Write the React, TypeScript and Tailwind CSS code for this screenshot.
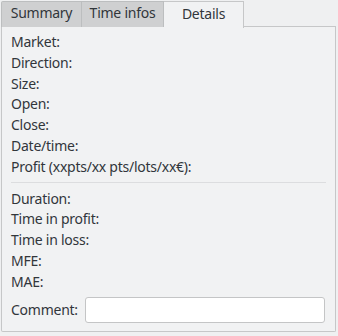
const font = { fontFamily: '"Noto Sans", sans-serif' };

const topRows = ['Market:', 'Direction:', 'Size:', 'Open:', 'Close:', 'Date/time:', 'Profit (xxpts/xx pts/lots/xx€):'];
const bottomRows = ['Duration:', 'Time in profit:', 'Time in loss:', 'MFE:', 'MAE:'];

export default function App() {
  return (
    <div className="w-[338px] h-[336px] bg-[#eff0f1] text-[14px] tracking-[-0.25px] text-[#31363b] pl-[1px] pr-[2px] pt-0" style={font}>
      <div className="flex h-[27px] items-end">
        <div className="h-[26px] w-[81px] flex justify-center pt-0 bg-[#cfd0d1] border border-b-0 border-[#bcbebf] rounded-tl-[2px]">Summary</div>
        <div className="h-[26px] w-[82px] flex justify-center pt-0 bg-[#cfd0d1] border border-l-0 border-b-0 border-[#bcbebf]">Time infos</div>
        <div className="h-[27px] w-[80px] flex justify-center pt-[1px] bg-[#f1f2f3] border border-l-0 border-b-0 border-[#c6c7c8] relative z-10 -mb-px">Details</div>
        <div className="flex-1 border-b border-[#c6c7c8]" />
      </div>
      <div className="h-[305px] bg-[#f1f2f3] border border-t-0 border-[#c6c7c8] rounded-b-[2px] px-[9px] pt-[5px]">
        {topRows.map((r) => (
          <div key={r} className="h-[20.8px] leading-[20.8px]">{r}</div>
        ))}
        <div className="h-px bg-[#dcdddf] mt-[4px] mb-[6px]" />
        {bottomRows.map((r) => (
          <div key={r} className="h-[20.8px] leading-[20.8px]">{r}</div>
        ))}
        <div className="flex items-center gap-[7px] mt-[4px]">
          <span>Comment:</span>
          <div className="h-[26px] flex-1 mr-[1px] bg-white border border-[#c4c5c6] rounded-[3px]" />
        </div>
      </div>
    </div>
  );
}
